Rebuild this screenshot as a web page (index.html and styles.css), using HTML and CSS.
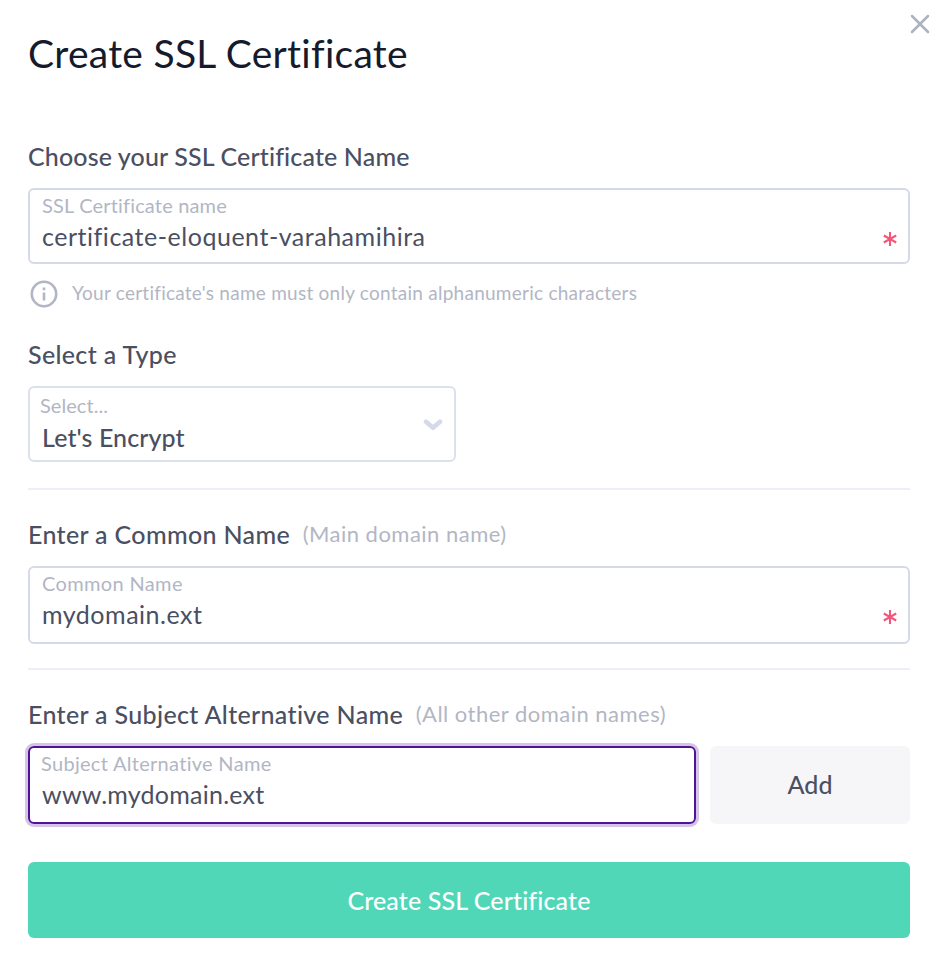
FILE: index.html
```html
<!DOCTYPE html>
<html lang="en">
<head>
<meta charset="utf-8">
<title>Create SSL Certificate</title>
<link rel="stylesheet" href="styles.css">
</head>
<body>
<main class="dialog">
  <button class="close" aria-label="Close">
    <svg width="20" height="20" viewBox="0 0 20 20"><path d="M2 2l16 16M18 2L2 18"/></svg>
  </button>
  <h1 class="title">Create SSL Certificate</h1>

  <section>
    <h2 class="heading heading-name">Choose your SSL Certificate Name</h2>
    <div class="field">
      <span class="field-label label-name">SSL Certificate name</span>
      <span class="field-value">certificate-eloquent-varahamihira</span>
      <svg class="required" width="14" height="14" viewBox="0 0 14 14"><path d="M7 0v14M.8 3.5l12.4 7M13.2 3.5l-12.4 7"/></svg>
    </div>
    <p class="hint">
      <svg class="info" width="28" height="28" viewBox="0 0 28 28"><circle cx="14" cy="14" r="12.2"/><path d="M14 12.5v8M14 7.5v2.8"/></svg>
      <span class="hint-text">Your certificate's name must only contain alphanumeric characters</span>
    </p>
  </section>

  <section class="section-type">
    <h2 class="heading">Select a Type</h2>
    <div class="field select">
      <span class="field-label">Select...</span>
      <span class="field-value">Let's Encrypt</span>
      <svg class="chevron" width="20" height="14" viewBox="0 0 20 14"><path d="M3 3.7l7 6 7-6"/></svg>
    </div>
  </section>

  <section class="section-ruled">
    <h2 class="heading">Enter a Common Name <small>(Main domain name)</small></h2>
    <div class="field tall">
      <span class="field-label">Common Name</span>
      <span class="field-value value-common">mydomain.ext</span>
      <svg class="required" width="14" height="14" viewBox="0 0 14 14"><path d="M7 0v14M.8 3.5l12.4 7M13.2 3.5l-12.4 7"/></svg>
    </div>
  </section>

  <section class="section-ruled section-last">
    <h2 class="heading">Enter a Subject Alternative Name <small>(All other domain names)</small></h2>
    <div class="row">
      <div class="field tall focused">
        <span class="field-label label-alt">Subject Alternative Name</span>
        <span class="field-value value-alt">www.mydomain.ext</span>
      </div>
      <button class="add">Add</button>
    </div>
  </section>

  <button class="submit">Create SSL Certificate</button>
</main>
</body>
</html>
```
FILE: styles.css
```css
* { box-sizing: border-box; }

body {
  margin: 0;
  background: #fff;
  color: #4a4f62;
  font-family: Lato, "Open Sans", sans-serif;
}

h1, h2, p { margin: 0; }

svg {
  display: block;
  fill: none;
  stroke: currentColor;
}

button {
  border: 0;
  border-radius: 6px;
  font: 500 25px Lato, sans-serif;
}

.dialog {
  position: relative;
  height: 956px;
  padding: 29px 28px 0;
}

.close {
  position: absolute;
  top: 14px;
  right: 8px;
  padding: 0;
  background: none;
  color: #adb2c0;
}

.close svg {
  stroke-width: 2.5;
  stroke-linecap: round;
}

.title {
  height: 48px;
  margin-bottom: 63px;
  color: #151a2d;
  font-size: 39px;
  font-weight: 400;
  line-height: 48px;
  letter-spacing: .28px;
}

.heading {
  height: 32px;
  margin-bottom: 16px;
  font-size: 25px;
  font-weight: 500;
  line-height: 33px;
  letter-spacing: .34px;
  white-space: nowrap;
}

.heading-name { letter-spacing: .14px; }

.heading small {
  display: inline-block;
  margin-left: 6px;
  color: #b2b6c4;
  font-size: 22px;
  font-weight: 400;
  line-height: 28px;
  letter-spacing: .48px;
  vertical-align: 2px;
}

.field {
  position: relative;
  display: flex;
  flex-direction: column;
  height: 76px;
  padding: 3px 12px 0;
  border: 2px solid #d5d9e9;
  border-radius: 6px;
}

.field-label {
  color: #b2b6c4;
  font-size: 20px;
  line-height: 24px;
  letter-spacing: .35px;
}

.label-name { letter-spacing: .17px; }

.label-alt {
  margin-left: -1px;
  letter-spacing: .3px;
}

.field-value {
  margin-top: 1px;
  font-size: 25px;
  line-height: 37px;
  letter-spacing: .52px;
}

.value-alt { letter-spacing: .25px; }

.tall { height: 78px; }

.required {
  position: absolute;
  right: 11px;
  top: 42px;
  color: #f0577a;
  stroke-width: 2.1;
}

.hint {
  display: flex;
  align-items: center;
  gap: 14px;
  height: 28px;
  margin-top: 16px;
  padding-left: 2px;
  color: #b2b6c4;
  font-size: 19px;
  letter-spacing: .25px;
}

.hint-text { padding-bottom: 3px; }

.info { stroke-width: 2.6; }

.section-type { margin-top: 30px; }

.select {
  width: 428px;
  padding: 5px 10px 0;
  border-color: #dce0ed;
}

.select .field-label { letter-spacing: .05px; }

.select .field-value {
  margin: 2px 0 0 2px;
  font-weight: 500;
  letter-spacing: .1px;
}

.chevron {
  position: absolute;
  right: 11px;
  top: 30px;
  color: #d5d9e9;
  stroke-width: 4.5;
  stroke-linecap: round;
  stroke-linejoin: round;
}

.section-ruled {
  margin-top: 26px;
  padding-top: 28px;
  border-top: 2px solid #eceefb;
}

.section-last { margin-top: 24px; }

.row {
  display: flex;
  gap: 14px;
}

.focused {
  flex: 1;
  border-color: #4f1496;
  box-shadow: 0 0 0 3px #d4c4e6;
}

.add {
  width: 200px;
  height: 78px;
  padding-bottom: 3px;
  background: #f6f6f8;
  color: #4a4f62;
}

.submit {
  display: block;
  width: 100%;
  height: 76px;
  margin-top: 38px;
  background: #4fd7b7;
  color: #fff;
  letter-spacing: .12px;
}
```
